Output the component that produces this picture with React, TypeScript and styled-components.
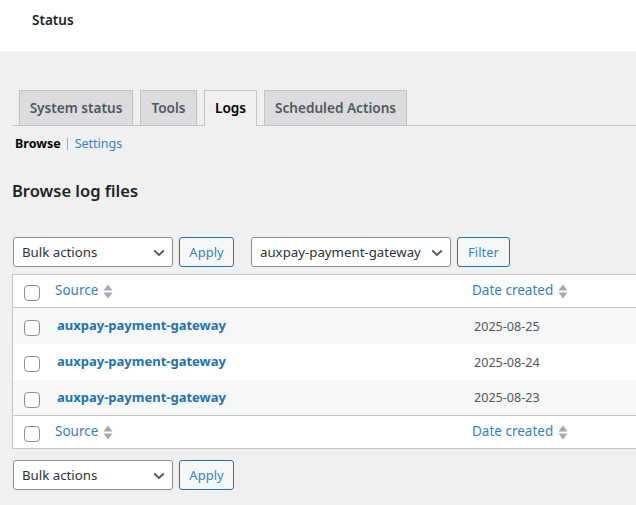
import styled, { createGlobalStyle } from "styled-components";

const rows = [
	{ source: "auxpay-payment-gateway", date: "2025-08-25", striped: true },
	{ source: "auxpay-payment-gateway", date: "2025-08-24", striped: false },
	{ source: "auxpay-payment-gateway", date: "2025-08-23", striped: true },
];

const tabs = [
	{ name: "System status", width: 114 },
	{ name: "Tools", width: 57 },
	{ name: "Logs", width: 53 },
	{ name: "Scheduled Actions", width: 143 },
];

const SortArrows = () => (
	<SortIcon width="10" height="15" viewBox="0 0 10 15">
		<path d="M5 0.5 L9.5 6.5 H0.5 Z" fill="#a7aaad" />
		<path d="M5 14.5 L9.5 8.5 H0.5 Z" fill="#a7aaad" />
	</SortIcon>
);

const Dropdown = ({ label, width }: { label: string; width: number }) => (
	<SelectWrap $width={width}>
		<Select defaultValue={label}>
			<option>{label}</option>
		</Select>
		<Chevron width="12" height="8" viewBox="0 0 12 8">
			<path d="M1.2 1.5 L6 6 L10.8 1.5" fill="none" stroke="#50575e" strokeWidth="1.8" />
		</Chevron>
	</SelectWrap>
);

const HeadRow = ({ footer }: { footer?: boolean }) => (
	<tr>
		<CheckCell $footer={footer} $head>
			<Check type="checkbox" />
		</CheckCell>
		<HeadCell $footer={footer}>
			<SortLink href="#">
				Source
				<SortArrows />
			</SortLink>
		</HeadCell>
		<HeadCell $footer={footer}>
			<SortLink href="#">
				Date created
				<SortArrows />
			</SortLink>
		</HeadCell>
	</tr>
);

export default function App() {
	return (
		<>
			<GlobalStyle />
			<Page>
				<TopBar>Status</TopBar>
				<Content>
					<TabBar>
						{tabs.map((tab) => (
							<Tab key={tab.name} $active={tab.name === "Logs"} $width={tab.width}>
								{tab.name}
							</Tab>
						))}
					</TabBar>
					<SubNav>
						<strong>Browse</strong>
						<Divider />
						<SubLink href="#">Settings</SubLink>
					</SubNav>
					<Heading>Browse log files</Heading>
					<Toolbar>
						<Dropdown label="Bulk actions" width={160} />
						<Button $width={55}>Apply</Button>
						<Spacer />
						<Dropdown label="auxpay-payment-gateway" width={200} />
						<Button $width={53}>Filter</Button>
					</Toolbar>
					<Table>
						<colgroup>
							<col width="34" />
							<col width="417" />
							<col />
						</colgroup>
						<thead>
							<HeadRow />
						</thead>
						<tbody>
							{rows.map((row) => (
								<Row key={row.date} $striped={row.striped}>
									<CheckCell>
										<Check type="checkbox" />
									</CheckCell>
									<SourceCell>
										<SourceLink href="#">{row.source}</SourceLink>
									</SourceCell>
									<DateCell>{row.date}</DateCell>
								</Row>
							))}
						</tbody>
						<tfoot>
							<HeadRow footer />
						</tfoot>
					</Table>
					<BottomToolbar>
						<Dropdown label="Bulk actions" width={160} />
						<Button $width={55}>Apply</Button>
					</BottomToolbar>
				</Content>
			</Page>
		</>
	);
}

const GlobalStyle = createGlobalStyle`
	html, body {
		margin: 0;
		background: #f0f0f1;
		overflow: hidden;
	}
	body {
		font-family: "Noto Sans", sans-serif;
		font-size: 13px;
		color: #3c434a;
	}
`;
const Page = styled.div`
	width: 636px;
	height: 505px;
	overflow: hidden;
`;
const TopBar = styled.div`
	height: 40px;
	padding: 11px 0 0 32px;
	background: #fff;
	font-size: 13.5px;
	font-weight: 600;
	line-height: 18px;
	color: #1d2327;
`;
const Content = styled.div`
	width: 660px;
	padding: 39px 0 0 12px;
`;
const TabBar = styled.div`
	display: flex;
	gap: 7px;
	height: 35px;
	padding-left: 7px;
	border-bottom: 1px solid #c3c4c7;
`;
const Tab = styled.div<{ $active?: boolean; $width: number }>`
	box-sizing: border-box;
	width: ${({ $width }) => $width}px;
	height: ${({ $active }) => ($active ? "36px" : "35px")};
	border: 1px solid #c3c4c7;
	border-bottom: 0;
	background: ${({ $active }) => ($active ? "#f0f0f1" : "#dcdcde")};
	color: ${({ $active }) => ($active ? "#000" : "#50575e")};
	font-size: 13.6px;
	font-weight: 600;
	line-height: 34px;
	text-align: center;
`;
const SubNav = styled.div`
	display: flex;
	align-items: center;
	height: 18px;
	margin-top: 9px;
	padding-left: 3px;
	font-size: 12.5px;
	line-height: 18px;
	color: #000;
`;
const Divider = styled.span`
	width: 1px;
	height: 12px;
	margin: 0 7px 0 6px;
	background: #a7aaad;
`;
const SubLink = styled.a`
	color: #3582c4;
	text-decoration: none;
`;
const Heading = styled.h2`
	margin: 26px 0 0;
	font-size: 16.5px;
	font-weight: 600;
	line-height: 24px;
	color: #1d2327;
`;
const Toolbar = styled.div`
	display: flex;
	gap: 6px;
	margin: 34px 0 7px 1px;
`;
const BottomToolbar = styled(Toolbar)`
	margin: 11px 0 0 1px;
`;
const Spacer = styled.div`
	width: 5px;
`;
const SelectWrap = styled.div<{ $width: number }>`
	position: relative;
	width: ${({ $width }) => $width}px;
	height: 30px;
`;
const Select = styled.select`
	appearance: none;
	width: 100%;
	height: 100%;
	padding: 0 24px 0 8px;
	border: 1px solid #8c8f94;
	border-radius: 3px;
	background: #fff;
	color: #2c3338;
	font-family: inherit;
	font-size: 13.25px;
`;
const Chevron = styled.svg`
	position: absolute;
	top: 12px;
	right: 8px;
	pointer-events: none;
`;
const Button = styled.button<{ $width: number }>`
	width: ${({ $width }) => $width}px;
	height: 30px;
	padding: 0;
	border: 1px solid #2271b1;
	border-radius: 3px;
	background: #f6f7f7;
	color: #3582c4;
	font-family: inherit;
	font-size: 13px;
`;
const Table = styled.table`
	width: 100%;
	table-layout: fixed;
	border-collapse: separate;
	border-spacing: 0;
	border: 1px solid #c3c4c7;
	background: #fff;
`;
const HeadCell = styled.th<{ $footer?: boolean }>`
	height: 33px;
	padding: 0 0 ${({ $footer }) => ($footer ? "2px" : "3px")} 8px;
	box-sizing: border-box;
	text-align: left;
	font-weight: 400;
	${({ $footer }) =>
		$footer ? "border-top: 1px solid #c3c4c7;" : "border-bottom: 1px solid #c3c4c7;"}
`;
const SortLink = styled.a`
	display: inline-flex;
	align-items: flex-start;
	gap: 5px;
	color: #3582c4;
	font-size: 13.5px;
	line-height: 18px;
	text-decoration: none;
`;
const SortIcon = styled.svg`
	margin-top: 3px;
`;
const Row = styled.tr<{ $striped?: boolean }>`
	background: ${({ $striped }) => ($striped ? "#f6f7f7" : "#fff")};
`;
const CheckCell = styled.td<{ $head?: boolean; $footer?: boolean }>`
	padding: 4px 0 0 11px;
	vertical-align: middle;
	${({ $head, $footer }) =>
		$head ? ($footer ? "border-top: 1px solid #c3c4c7;" : "border-bottom: 1px solid #c3c4c7;") : ""}
`;
const Check = styled.input`
	appearance: none;
	display: block;
	width: 16px;
	height: 16px;
	margin: 0;
	border: 1px solid #8c8f94;
	border-radius: 4px;
	background: #fff;
`;
const SourceCell = styled.td`
	height: 36px;
	padding: 0 0 2px 10px;
	box-sizing: border-box;
	tr:last-child > & {
		height: 35px;
	}
`;
const SourceLink = styled.a`
	color: #2271b1;
	font-size: 13px;
	font-weight: 700;
	text-decoration: none;
`;
const DateCell = styled.td`
	padding: 0 0 0 10px;
	font-size: 12.6px;
	color: #50575e;
`;
